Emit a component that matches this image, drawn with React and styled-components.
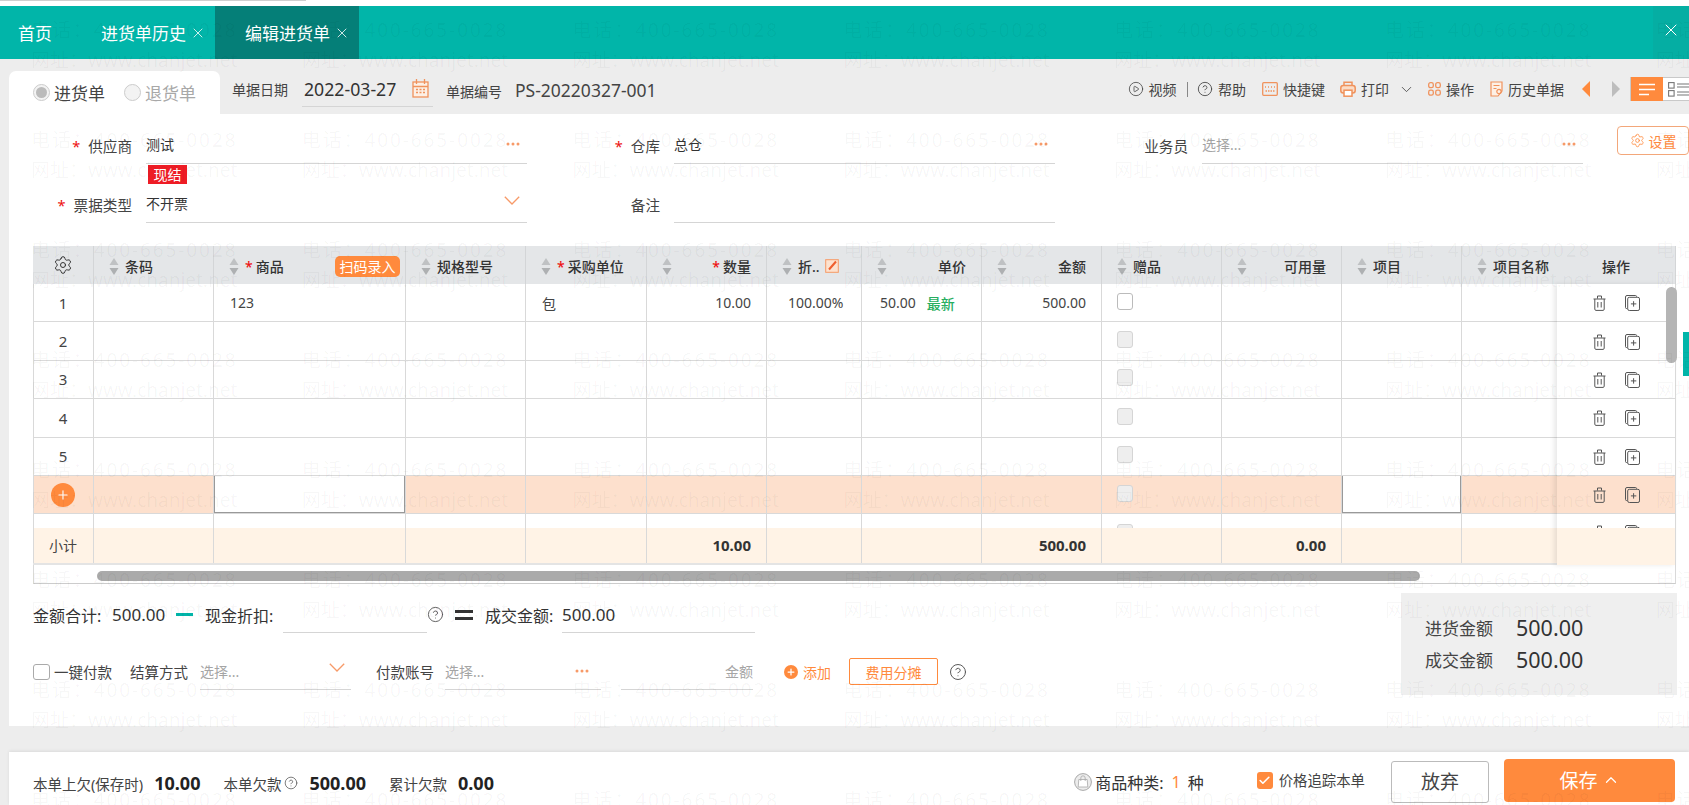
import React from "react";
import styled, { createGlobalStyle } from "styled-components";
import { CirclePlay, CircleHelp, ChevronDown, ChevronUp, Settings, X, Plus, Check } from "lucide-react";

const ORANGE = "#ff8a3d";
const LINE = "#d9d9d9";
const Global = createGlobalStyle`
  html, body { margin: 0; padding: 0; background: #fff; }
  body { font-family: "Noto Sans", "Noto Sans CJK SC", sans-serif; color: #333; }
  * { box-sizing: border-box; }
`;

const Page = styled.div`
  position: relative; width: 1689px; height: 805px; overflow: hidden;
  display: flex; flex-direction: column; background: #ededed;
`;
const TopStrip = styled.div`
  height: 6px; flex: none; background: #fff;
  &::before { content: ""; display: block; height: 1px; width: 306px; background: #cfcfcf; }
`;
const TabBar = styled.div`
  height: 53px; flex: none; display: flex; background: #01b5a9; color: #fff;
`;
const Tab = styled.div`
  display: flex; align-items: center; gap: 4px; height: 100%;
  width: ${p => p.$w}px; padding-left: ${p => p.$pl}px; font-size: 17px; white-space: nowrap;
  background: ${p => (p.$active ? "#057f78" : "transparent")};
`;
const CloseAll = styled.div`
  margin-left: auto; width: 36px; display: flex; align-items: center; justify-content: center;
  background: #05aea3; padding-bottom: 5px;
`;
const HeadStrip = styled.div`
  height: 55px; flex: none; padding: 12px 0 0 9px; display: flex;
`;
const TabCard = styled.div`
  width: 211px; height: 43px; background: #fff; border-radius: 7px 7px 0 0;
  padding-left: 24px; display: flex; align-items: center; font-size: 17px;
`;
const Radio = styled.span`
  width: 17px; height: 17px; border-radius: 50%; border: 1px solid #ccc; background: #f3f3f3; flex: none;
  margin-left: ${p => p.$ml || 0}px; margin-right: 4px; display: flex; align-items: center; justify-content: center;
  &::after { content: ""; width: 11px; height: 11px; border-radius: 50%; background: ${p => (p.$on ? "#bbb" : "transparent")}; }
`;
const RadioText = styled.span`
  color: ${p => (p.$muted ? "#a8a8a8" : "#444")};
`;
const MetaRow = styled.div`
  flex: 1; height: 43px; padding-bottom: 7px; display: flex; align-items: center; min-width: 0;
`;
const MetaLabel = styled.span`
  font-size: 14px; color: #444; margin-left: ${p => p.$ml}px; white-space: nowrap; padding-top: ${p => p.$pt || 0}px;
`;
const DateInput = styled.div`
  width: 131px; height: 36px; margin-left: 14px; border-bottom: 1px solid #d5d5d5; padding-left: 2px;
  display: flex; align-items: center; justify-content: space-between; padding-right: 4px;
  font-size: 17.7px; color: #333;
`;
const BillNo = styled.span`
  font-size: 17.5px; color: #444; margin-left: 13px; padding-top: 2px;
`;
const Toolbar = styled.div`
  margin-left: auto; display: flex; align-items: center; font-size: 14px; color: #444; height: 36px;
`;
const ToolItem = styled.div`
  display: flex; align-items: center; gap: 5px; margin-left: ${p => p.$ml || 0}px; white-space: nowrap;
`;
const Sep = styled.span`
  width: 1.5px; height: 15px; background: #888; margin-left: ${p => p.$ml}px;
`;
const Tri = styled.span`
  width: 0; height: 0; margin-left: ${p => p.$ml}px;
  border-top: 8px solid transparent; border-bottom: 8px solid transparent;
  ${p => (p.$left ? `border-right: 8px solid ${ORANGE};` : "border-left: 8px solid #bdbdbd;")}
`;
const Toggle = styled.div`
  margin-left: 10px; width: 59px; height: 24px; display: flex; border: 1px solid #c9c9c9; border-right: 0; background: #fff;
`;
const ToggleOn = styled.div`
  width: 33px; background: ${ORANGE}; display: flex; align-items: center; justify-content: center; margin: -1px 0;
`;
const ToggleOff = styled.div`
  flex: 1; display: flex; align-items: center; padding-left: 5px;
`;

const Sheet = styled.div`
  height: 612px; flex: none; margin-left: 9px; background: #fff; display: flex; flex-direction: column;
`;
const FormGrid = styled.div`
  padding-top: 11px; margin-bottom: 23px; display: grid;
  grid-template-columns: 137px 381px 147px 381px 147px 381px 106px;
  grid-template-rows: 39px 20px 39px; align-items: center; font-size: 14px;
`;
const FieldLabel = styled.label`
  justify-self: end; padding-right: 14px; padding-top: 2px; font-size: 14.6px; color: #444;
  grid-column: ${p => p.$col}; grid-row: ${p => p.$row};
  & b { color: #e11; font-weight: 400; margin-right: 8px; }
`;
const FieldValue = styled.div`
  grid-column: ${p => p.$col}; grid-row: ${p => p.$row}; height: 39px; border-bottom: 1px solid #d5d5d5;
  display: flex; align-items: center; justify-content: space-between; padding-right: 7px; font-size: 14px; color: #333;
`;
const Placeholder = styled.span`
  color: #a5a5a5; font-size: 14px;
`;
const CashTag = styled.span`
  grid-column: 2; grid-row: 2; justify-self: start; margin-left: 2px; margin-top: 1px; height: 19px; width: 39px;
  background: #ee1c25; color: #fff; font-size: 14px; line-height: 19px; text-align: center;
`;
const SettingBtn = styled.button`
  grid-column: 7; grid-row: 1; align-self: start; margin: 1px 0 0 34px; width: 72px; height: 29px;
  border: 1px solid #f3a77a; border-radius: 4px; background: #fff; color: ${ORANGE}; font: inherit; font-size: 14px;
  display: flex; align-items: center; justify-content: center; gap: 4px; padding: 0;
`;

const TableWrap = styled.div`
  position: relative; margin-left: 24px; width: 1643px; flex: none; font-size: 14px; color: #444;
`;
const COLS = "61px 120px 192px 120px 121px 120px 95px 120px 120px 120px 120px 120px 214px";
const Row = styled.div`
  display: grid; grid-template-columns: ${COLS}; height: ${p => p.$h}px; overflow: hidden;
  background: ${p => p.$bg || "transparent"}; box-shadow: inset 1px 0 0 ${LINE};
  border-bottom: ${p => p.$noLine ? "0" : `1px solid ${p.$line || LINE}`};
`;
const HeadRow = styled(Row)`
  background: #e4e6e8; box-shadow: none; border-bottom: 0;
  font-weight: 500; color: #333;
`;
const HeadCell = styled.div`
  display: flex; align-items: center; padding: 2px 15px 0 14px; border-right: 1px solid #d3d5d7;
  white-space: nowrap; justify-content: ${p => p.$right ? "space-between" : "flex-start"};
`;
const GearCell = styled(HeadCell)`
  justify-content: center; padding: 0;
`;
const HeadText = styled.span`
  margin-left: ${p => p.$right ? "auto" : "5px"};
  & b { color: #e11; font-weight: 500; margin-right: 3px; }
`;
const ScanBtn = styled.span`
  margin-left: auto; margin-right: -10px; width: 65px; height: 21px; border-radius: 5px; background: ${ORANGE};
  color: #fff; font-size: 14px; font-weight: 400; line-height: 21px; text-align: center;
`;
const OpsHead = styled.span`
  margin-left: auto; margin-right: 30px;
`;
const Cell = styled.div`
  display: flex; align-items: center; border-right: 1px solid ${LINE}; min-width: 0; white-space: nowrap;
  padding: 0 15px 0 ${p => p.$pl ?? 15}px; justify-content: ${p => p.$align || "flex-start"};
  font-weight: ${p => p.$bold ? 700 : 400}; ${p => p.$bold ? "color:#333; font-size:15px;" : ""}
  ${p => p.$edit ? "background:#fff; box-shadow: inset 0 0 0 1px #999; margin-top:-1px;" : ""}
  ${p => p.$top ? "align-items:flex-start;" : ""}
`;
const NumCell = styled(Cell)`
  font-size: ${p => p.$small ? 14 : 15}px; padding: 0; justify-content: center;
`;
const Fresh = styled.span`
  color: #27ae60; margin-left: 11px; font-weight: 500;
`;
const Box = styled.span`
  display: block; flex: none; width: 16px; height: 17px; border-radius: 3px;
  border: 1px solid ${p => p.$off ? "#d5d5d5" : "#bbb"}; background: ${p => p.$off ? "#eee" : "#fff"};
  margin-top: ${p => p.$mt ?? -3}px;
`;
const PlusDot = styled.span`
  width: 24px; height: 24px; border-radius: 50%; background: ${ORANGE}; color: #fff;
  display: flex; align-items: center; justify-content: center;
`;
const SubRow = styled(Row)`
  background: #fff3e6; border-bottom: 2px solid #e4e4e4;
`;
const ScrollStrip = styled.div`
  position: relative; height: 19px; border-left: 1px solid ${LINE}; border-right: 1px solid ${LINE}; border-bottom: 1px solid #ccc;
`;
const HThumb = styled.div`
  position: absolute; left: 63px; top: 6px; width: 1323px; height: 10px; border-radius: 5px; background: #aaa;
`;
const OpsPanel = styled.div`
  position: absolute; left: 1524px; top: 38px; width: 119px; height: 281px; background: #fff;
  box-shadow: -3px 0 5px rgba(0,0,0,.09); border-right: 1px solid ${LINE}; display: flex; flex-direction: column;
`;
const OpsRow = styled.div`
  height: ${p => p.$h}px; flex: none; display: flex; align-items: ${p => p.$top ? "flex-start" : "center"}; overflow: hidden;
  padding: ${p => p.$top ? "11px" : "1px"} 0 0 36px; gap: 19px; background: ${p => p.$bg || "transparent"};
  border-bottom: ${p => p.$noLine ? "0" : `1px solid ${LINE}`};
`;
const VThumb = styled.div`
  position: absolute; left: 1633px; top: 41px; width: 11px; height: 76px; border-radius: 6px; background: #b5b5b5;
`;
const TealSliver = styled.div`
  position: absolute; left: 1683px; top: 332px; width: 6px; height: 44px; background: #01b5a9;
`;

const Bottom = styled.div`
  display: flex; flex: 1; min-height: 0;
`;
const LeftCol = styled.div`
  width: 1392px; padding-left: 24px; display: flex; flex-direction: column;
`;
const TotalsRow = styled.div`
  height: 36px; margin-top: 13px; display: flex; align-items: center; font-size: 16px; color: #333;
`;
const Lbl = styled.span`
  flex: none; white-space: nowrap; width: ${p => p.$w ? `${p.$w}px` : "auto"}; margin-left: ${p => p.$ml || 0}px;
`;
const BigNum = styled(Lbl)`
  font-size: 17px;
`;
const Dash = styled.span`
  width: 17px; height: 3px; background: #01b5a9; flex: none;
`;
const Equals = styled.span`
  margin-left: 11px; width: 18px; height: 10px; border-top: 3px solid #333; border-bottom: 3px solid #333; flex: none;
`;
const UnderInput = styled.div`
  width: ${p => p.$w}px; height: 36px; margin-left: ${p => p.$ml || 0}px; border-bottom: 1px solid #d5d5d5; flex: none;
  display: flex; align-items: center; justify-content: space-between; padding-right: ${p => p.$pr || 0}px;
  ${p => p.$end ? "justify-content:flex-end;" : ""}
`;
const PayRow = styled.div`
  height: 36px; margin-top: 21px; display: flex; align-items: center; font-size: 14.5px; color: #444;
`;
const Check0 = styled.span`
  width: 17px; height: 16px; border: 1px solid #aaa; border-radius: 3px; flex: none; background: #fff;
`;
const AddLink = styled.span`
  margin-left: 31px; display: flex; align-items: center; gap: 5px; color: ${ORANGE}; white-space: nowrap; font-size: 14px;
`;
const AddDot = styled.span`
  width: 14px; height: 14px; border-radius: 50%; background: ${ORANGE}; color: #fff; display: flex; align-items: center; justify-content: center;
`;
const ShareBtn = styled.button`
  margin-left: 18px; width: 89px; height: 27px; background: #fff; border: 1px solid ${ORANGE}; border-radius: 2px;
  color: ${ORANGE}; font: inherit; font-size: 14px; padding: 0;
`;
const HelpWrap = styled.span`
  display: flex; flex: none; margin-left: ${p => p.$ml || 0}px; color: #555;
`;
const Summary = styled.div`
  margin-top: 9px; width: 276px; height: 102px; background: #efefef; padding-left: 24px;
  display: flex; flex-direction: column; justify-content: center;
`;
const SumRow = styled.div`
  height: 32px; display: flex; align-items: center; font-size: 17px; color: #444;
  & strong { font-weight: 400; font-size: 21.5px; margin-left: 23px; color: #333; }
`;
const Gutter = styled.div`
  height: 26px; flex: none;
`;
const Footer = styled.div`
  flex: 1; margin-left: 9px; background: #fff; box-shadow: 0 -1px 3px rgba(0,0,0,.08); display: flex; padding-left: 24px;
`;
const FootLeft = styled.div`
  display: flex; align-items: center; padding-top: 9px; font-size: 14.5px; color: #444;
  & strong { font-size: 18px; color: #222; font-weight: 700; margin-left: 11px; }
`;
const FootRight = styled.div`
  margin-left: auto; padding-right: 14px; display: flex; align-items: center;
`;
const Kinds = styled.div`
  display: flex; align-items: center; font-size: 16px; color: #333; padding-top: 7px;
  & i { font-style: normal; color: ${ORANGE}; margin: 0 7px 0 8px; }
`;
const TrackBox = styled.span`
  width: 16px; height: 17px; border-radius: 3px; background: ${ORANGE}; color: #fff; margin-left: 53px;
  display: flex; align-items: center; justify-content: center; flex: none; margin-top: 3px;
`;
const TrackText = styled.span`
  font-size: 14.4px; color: #444; margin-left: 6px; margin-top: 2px; white-space: nowrap;
`;
const Discard = styled.button`
  width: 98px; height: 42px; margin-left: 26px; margin-top: 6px; border: 1px solid #bbb; border-radius: 3px; background: #fff;
  font: inherit; font-size: 19px; color: #444; padding: 0 0 2px;
`;
const Save = styled.button`
  width: 171px; height: 43px; margin-left: 15px; margin-top: 4px; border: 0; border-radius: 4px; background: ${ORANGE};
  font: inherit; font-size: 19px; color: #fff; padding: 0 0 2px; display: flex; align-items: center; justify-content: center; gap: 4px;
`;

const Watermark = styled.div`
  position: absolute; inset: 0; padding: 15px 0 0 31px; pointer-events: none; overflow: hidden;
  display: grid; grid-template-columns: repeat(7, 270.8px); grid-auto-rows: 110px;
`;
const MarkTile = styled.div`
  white-space: nowrap; color: rgba(0,0,0,.04); font-size: 19px; line-height: 30px;
`;
const MarkPhone = styled.div`
  letter-spacing: 1.9px;
`;

const Icon = styled.svg`
  display: block; flex: none;
`;
const Dots = () => (
  <Icon width="14" height="4" viewBox="0 0 14 4" fill="#f79a68">
    <circle cx="2" cy="2" r="1.5" /><circle cx="7" cy="2" r="1.5" /><circle cx="12" cy="2" r="1.5" />
  </Icon>
);
const ChevronWrap = styled.span`
  display: block; flex: none; margin-top: ${p => p.$mt}px;
`;
const Chevron = ({ mt = -6 }) => (
  <ChevronWrap $mt={mt}>
    <Icon width="16" height="9" viewBox="0 0 16 9" fill="none" stroke="#f79a68" strokeWidth="1.3">
      <path d="M.8.8 8 8 15.2.8" />
    </Icon>
  </ChevronWrap>
);
const Calendar = () => (
  <Icon width="17" height="19" viewBox="0 0 17 19" fill="none" stroke="#f0925c" strokeWidth="1.3">
    <rect x="1" y="3" width="15" height="15" fill="#fdf0e6" />
    <path d="M4.5 0v5M12.5 0v5M1 7.5h15" />
    <path d="M4 10.5h2M7.5 10.5h2M11 10.5h2M4 13.5h2M7.5 13.5h2M11 13.5h2" strokeWidth="1.5" />
  </Icon>
);
const KeyIcon = () => (
  <Icon width="16" height="14" viewBox="0 0 16 14" fill="none" stroke="#f0925c" strokeWidth="1.3">
    <rect x=".7" y=".7" width="14.6" height="12.6" rx="1" />
    <path d="M3 5h1M6 5h1M9 5h1M12 5h1M3.5 9h9" strokeDasharray="1.5 1" />
  </Icon>
);
const PrintIcon = () => (
  <Icon width="16" height="16" viewBox="0 0 16 16" fill="none" stroke="#f0925c" strokeWidth="1.5">
    <path d="M4 5V1.2h8V5" />
    <rect x=".8" y="4.6" width="14.4" height="7.4" rx="2.5" fill="#fbdcc6" />
    <rect x="4" y="9.2" width="8" height="6" fill="#fff" />
  </Icon>
);
const FourIcon = () => (
  <Icon width="13" height="14" viewBox="0 0 13 14" fill="none" stroke="#f0925c" strokeWidth="1.3">
    <rect x=".7" y=".7" width="4.6" height="5" rx="1.8" /><rect x="7.7" y=".7" width="4.6" height="5" rx="1.8" />
    <rect x=".7" y="8.2" width="4.6" height="5" rx="1.8" /><rect x="7.7" y="8.2" width="4.6" height="5" rx="1.8" />
  </Icon>
);
const HistIcon = () => (
  <Icon width="13" height="16" viewBox="0 0 13 16" fill="none" stroke="#f0925c" strokeWidth="1.2">
    <path d="M1 1h11v9l-4 5H1z" fill="#fdf0e6" /><path d="M3.5 4.5h6M3.5 7.5h3" />
    <circle cx="9" cy="10.5" r="2.2" />
  </Icon>
);
const ListIcon = ({ color }) => (
  <Icon width="16" height="13" viewBox="0 0 16 13" fill="none" stroke={color} strokeWidth="1.6">
    <path d="M0 1.5h16M0 6.5h16M0 11.5h10" />
  </Icon>
);
const GridIcon = () => (
  <Icon width="21" height="15" viewBox="0 0 21 15" fill="none" stroke="#777" strokeWidth="1.1">
    <rect x=".6" y=".6" width="5.5" height="5.5" /><rect x=".6" y="8.6" width="5.5" height="5.5" />
    <path d="M9 2h12M9 5h12M9 10h12M9 13h12" />
  </Icon>
);
const Trash = () => (
  <Icon width="13" height="16" viewBox="0 0 13 16" fill="none" stroke="#555" strokeWidth="1">
    <path d="M.5 4h12M4.5 3.6V1h4v2.6" />
    <path d="M1.8 4v10.2c0 .7.5 1.2 1.2 1.2h7c.7 0 1.2-.5 1.2-1.2V4" />
    <path d="M4.8 7v5.5M8.2 7v5.5" />
  </Icon>
);
const CopyPlus = () => (
  <Icon width="15" height="16" viewBox="0 0 15 16" fill="none" stroke="#555" strokeWidth="1">
    <path d="M11.5 1.8V1.5a1 1 0 0 0-1-1H2A1.5 1.5 0 0 0 .5 2v10.5a1 1 0 0 0 1 1h.6" />
    <rect x="2.7" y="2.3" width="11.8" height="13.2" rx="1.6" />
    <path d="M8.6 6.2v5.4M5.9 8.9h5.4" />
  </Icon>
);
const Sort = () => (
  <Icon width="12" height="17" viewBox="0 0 12 17">
    <path d="M6 0l4.5 7h-9z" fill="#bfc1c3" /><path d="M1.5 10h9L6 17z" fill="#aeb0b2" />
  </Icon>
);
const EditWrap = styled.span`
  display: block; flex: none; margin-left: 5px;
`;
const EditIcon = () => (
  <EditWrap>
    <Icon width="14" height="14" viewBox="0 0 14 14" fill="none">
      <rect x=".7" y=".7" width="12.6" height="12.6" fill="#fde2cf" stroke="#f59a66" />
      <path d="M4 10.5 11 2.5" stroke="#ef5f2e" strokeWidth="2" />
    </Icon>
  </EditWrap>
);
const Bag = () => (
  <Icon width="18" height="18" viewBox="0 0 18 18" fill="#ececec" stroke="#a8a8a8" strokeWidth="1">
    <circle cx="9" cy="9" r="8.4" />
    <path d="M4.8 6.5h8.4l.6 7.5H4.2z" fill="#fff" strokeWidth=".8" /><path d="M6.8 8V5a2.2 2.2 0 0 1 4.4 0v3" fill="none" strokeWidth=".8" />
  </Icon>
);
const Help = ({ size = 16 }) => <CircleHelp size={size} strokeWidth={1.3} />;

const HEADS = [
  { t: "条码" }, { t: "商品", req: 1, scan: 1 }, { t: "规格型号" }, { t: "采购单位", req: 1 },
  { t: "数量", req: 1, right: 1 }, { t: "折..", edit: 1 }, { t: "单价", right: 1 }, { t: "金额", right: 1 },
  { t: "赠品" }, { t: "可用量", right: 1 }, { t: "项目" }, { t: "项目名称", ops: 1 },
];
const HL = "#fde0cd";
const BLANK = Array.from({ length: 12 });
const Blank = ({ edit }) => BLANK.map((_, i) => (
  i === 8 ? <Cell key={i} $pl={15}><Box $off /></Cell> : <Cell key={i} $edit={edit && (i === 1 || i === 10)} />
));

export default function App() {
  const tiles = Array.from({ length: 56 });
  return (
    <Page>
      <Global />
      <TopStrip />
      <TabBar>
        <Tab $w={71} $pl={18}>首页</Tab>
        <Tab $w={144} $pl={30}>进货单历史<X size={16} strokeWidth={1.2} /></Tab>
        <Tab $w={144} $pl={30} $active>编辑进货单<X size={16} strokeWidth={1.2} /></Tab>
        <CloseAll><X size={20} strokeWidth={1.2} /></CloseAll>
      </TabBar>
      <HeadStrip>
        <TabCard>
          <Radio $on /><RadioText>进货单</RadioText>
          <Radio $ml={19} /><RadioText $muted>退货单</RadioText>
        </TabCard>
        <MetaRow>
          <MetaLabel $ml={12}>单据日期</MetaLabel>
          <DateInput>2022-03-27<Calendar /></DateInput>
          <MetaLabel $ml={13} $pt={3}>单据编号</MetaLabel>
          <BillNo>PS-20220327-001</BillNo>
          <Toolbar>
            <ToolItem><CirclePlay size={16} strokeWidth={1.2} />视频</ToolItem>
            <Sep $ml={10} />
            <ToolItem $ml={9}><Help size={16} />帮助</ToolItem>
            <ToolItem $ml={16}><KeyIcon />快捷键</ToolItem>
            <ToolItem $ml={15}><PrintIcon />打印</ToolItem>
            <ToolItem $ml={9}><ChevronDown size={17} strokeWidth={1.2} /></ToolItem>
            <ToolItem $ml={13}><FourIcon />操作</ToolItem>
            <ToolItem $ml={16}><HistIcon />历史单据</ToolItem>
            <Tri $left $ml={18} />
            <Tri $ml={22} />
            <Toggle>
              <ToggleOn><ListIcon color="#fff" /></ToggleOn>
              <ToggleOff><GridIcon /></ToggleOff>
            </Toggle>
          </Toolbar>
        </MetaRow>
      </HeadStrip>
      <Sheet>
        <FormGrid>
          <FieldLabel $col={1} $row={1}><b>*</b>供应商</FieldLabel>
          <FieldValue $col={2} $row={1}>测试<Dots /></FieldValue>
          <FieldLabel $col={3} $row={1}><b>*</b>仓库</FieldLabel>
          <FieldValue $col={4} $row={1}>总仓<Dots /></FieldValue>
          <FieldLabel $col={5} $row={1}>业务员</FieldLabel>
          <FieldValue $col={6} $row={1}><Placeholder>选择...</Placeholder><Dots /></FieldValue>
          <SettingBtn><Settings size={15} strokeWidth={1.3} />设置</SettingBtn>
          <CashTag>现结</CashTag>
          <FieldLabel $col={1} $row={3}><b>*</b>票据类型</FieldLabel>
          <FieldValue $col={2} $row={3}>不开票<Chevron /></FieldValue>
          <FieldLabel $col={3} $row={3}>备注</FieldLabel>
          <FieldValue $col={4} $row={3} />
        </FormGrid>
        <TableWrap>
          <HeadRow $h={38}>
            <GearCell><Settings size={20} strokeWidth={1.2} /></GearCell>
            {HEADS.map(h => (
              <HeadCell key={h.t} $right={h.right}>
                <Sort />
                <HeadText $right={h.right}>{h.req ? <b>*</b> : null}{h.t}</HeadText>
                {h.edit ? <EditIcon /> : null}
                {h.scan ? <ScanBtn>扫码录入</ScanBtn> : null}
                {h.ops ? <OpsHead>操作</OpsHead> : null}
              </HeadCell>
            ))}
          </HeadRow>
          <Row $h={38.4}>
            <NumCell>1</NumCell>
            <Cell />
            <Cell $pl={16}>123</Cell>
            <Cell />
            <Cell $pl={16}>包</Cell>
            <Cell $align="flex-end">10.00</Cell>
            <Cell $pl={21}>100.00%</Cell>
            <Cell $pl={18}>50.00<Fresh>最新</Fresh></Cell>
            <Cell $align="flex-end">500.00</Cell>
            <Cell><Box /></Cell>
            <Cell /><Cell /><Cell />
          </Row>
          {[2, 3, 4, 5].map(n => (
            <Row key={n} $h={38.4}><NumCell>{n}</NumCell><Blank /></Row>
          ))}
          <Row $h={38.4} $bg={HL}><NumCell><PlusDot><Plus size={14} strokeWidth={2} /></PlusDot></NumCell><Blank edit /></Row>
          <Row $h={13.6} $noLine>
            <NumCell />
            {BLANK.map((_, i) => (i === 8 ? <Cell key={i} $top><Box $off $mt={10} /></Cell> : <Cell key={i} />))}
          </Row>
          <SubRow $h={37}>
            <NumCell $small>小计</NumCell>
            <Cell /><Cell /><Cell /><Cell />
            <Cell $align="flex-end" $bold>10.00</Cell>
            <Cell /><Cell />
            <Cell $align="flex-end" $bold>500.00</Cell>
            <Cell />
            <Cell $align="flex-end" $bold>0.00</Cell>
            <Cell /><Cell />
          </SubRow>
          <ScrollStrip><HThumb /></ScrollStrip>
          <OpsPanel>
            {[0, 1, 2, 3, 4].map(i => (
              <OpsRow key={i} $h={38.4}><Trash /><CopyPlus /></OpsRow>
            ))}
            <OpsRow $h={38.4} $bg={HL}><Trash /><CopyPlus /></OpsRow>
            <OpsRow $h={13.6} $noLine $top><Trash /><CopyPlus /></OpsRow>
            <OpsRow $h={37} $bg="#fff3e6" $noLine />
          </OpsPanel>
          <VThumb />
        </TableWrap>
        <Bottom>
          <LeftCol>
            <TotalsRow>
              <Lbl $w={79}>金额合计:</Lbl>
              <BigNum $w={64}>500.00</BigNum>
              <Dash />
              <Lbl $w={78} $ml={12}>现金折扣:</Lbl>
              <UnderInput $w={144} />
              <HelpWrap><Help size={17} /></HelpWrap>
              <Equals />
              <Lbl $w={77} $ml={12}>成交金额:</Lbl>
              <UnderInput $w={193}><BigNum>500.00</BigNum></UnderInput>
            </TotalsRow>
            <PayRow>
              <Check0 />
              <Lbl $ml={4}>一键付款</Lbl>
              <Lbl $ml={18}>结算方式</Lbl>
              <UnderInput $w={151} $ml={12} $pr={6}><Placeholder>选择...</Placeholder><Chevron mt={-7} /></UnderInput>
              <Lbl $ml={25}>付款账号</Lbl>
              <UnderInput $w={156} $ml={11} $pr={12}><Placeholder>选择...</Placeholder><Dots /></UnderInput>
              <UnderInput $w={132} $ml={20} $end><Placeholder>金额</Placeholder></UnderInput>
              <AddLink><AddDot><Plus size={10} strokeWidth={3} /></AddDot>添加</AddLink>
              <ShareBtn>费用分摊</ShareBtn>
              <HelpWrap $ml={11}><Help size={18} /></HelpWrap>
            </PayRow>
          </LeftCol>
          <Summary>
            <SumRow>进货金额<strong>500.00</strong></SumRow>
            <SumRow>成交金额<strong>500.00</strong></SumRow>
          </Summary>
        </Bottom>
      </Sheet>
      <Gutter />
      <Footer>
        <FootLeft>
          <Lbl>本单上欠(保存时)</Lbl><strong>10.00</strong>
          <Lbl $ml={23}>本单欠款</Lbl><HelpWrap $ml={3}><Help size={14} /></HelpWrap><strong>500.00</strong>
          <Lbl $ml={23}>累计欠款</Lbl><strong>0.00</strong>
        </FootLeft>
        <FootRight>
          <Kinds><Bag /><Lbl $ml={3}>商品种类:</Lbl><i>1</i>种</Kinds>
          <TrackBox><Check size={13} strokeWidth={3} /></TrackBox>
          <TrackText>价格追踪本单</TrackText>
          <Discard>放弃</Discard>
          <Save>保存<ChevronUp size={18} strokeWidth={1.6} /></Save>
        </FootRight>
      </Footer>
      <TealSliver />
      <Watermark>
        {tiles.map((_, i) => (
          <MarkTile key={i}>
            <MarkPhone>电话：400-665-0028</MarkPhone>
            <div>网址：www.chanjet.net</div>
          </MarkTile>
        ))}
      </Watermark>
    </Page>
  );
}
